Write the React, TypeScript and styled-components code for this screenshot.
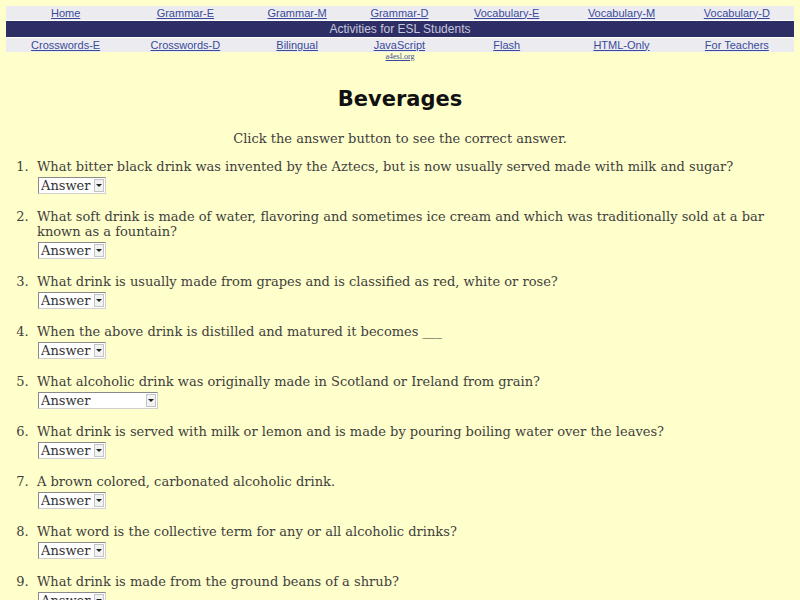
import React from 'react';
import styled, { createGlobalStyle } from 'styled-components';

const GlobalStyle = createGlobalStyle`
  html, body {
    margin: 0;
    background: #ffffcc;
  }
  body {
    padding: 6px 6px 0 6px;
    font-family: "DejaVu Serif", "Liberation Serif", serif;
    color: #3e3e3e;
  }
`;

const NavTable = styled.table`
  width: 100%;
  border-collapse: collapse;
  background: #ececf0;
  font-family: "Liberation Sans", Arial, sans-serif;
  font-size: 11px;
`;

const NavCell = styled.td`
  text-align: center;
  padding: 0 2px;
  height: 14px;
  line-height: 13px;
`;

const NavLink = styled.a`
  color: #3a4a9a;
  text-decoration: underline;
`;

const BandCell = styled.td`
  background: #2e2e66;
  color: #c8c8dc;
  text-align: center;
  font-size: 12px;
  height: 16px;
  line-height: 16px;
  padding: 0;
  border-top: 1px solid #ffffff;
  border-bottom: 1px solid #ffffff;
`;

const SiteLink = styled.a`
  display: block;
  text-align: center;
  font-family: "Liberation Serif", serif;
  font-size: 8px;
  line-height: 10px;
  color: #3a4a9a;
  margin-top: 0;
`;

const Title = styled.h1`
  font-family: "Comic Sans MS", "DejaVu Sans", sans-serif;
  font-weight: bold;
  font-size: 21px;
  color: #111;
  text-align: center;
  margin: 25px 0 20px;
`;

const Intro = styled.p`
  text-align: center;
  font-size: 13px;
  margin: 0 0 13px;
`;

const QuestionList = styled.ol`
  margin: 0;
  padding-left: 31px;
  font-size: 13px;
  line-height: 15px;
  li::marker {
    content: counter(list-item) ".\\00a0\\00a0";
  }
`;

const Question = styled.li`
  margin-bottom: 15px;
`;

const SelectWrap = styled.span<{ $wide?: boolean }>`
  position: relative;
  display: inline-block;
  width: ${(p) => (p.$wide ? '120px' : '68px')};
  height: 17px;
  margin-top: 3px;
  margin-left: 1px;
`;

const AnswerSelect = styled.select`
  appearance: none;
  width: 100%;
  height: 100%;
  box-sizing: border-box;
  border: 1px solid #8a8a8a;
  border-right-color: #d0d0d0;
  border-bottom-color: #d0d0d0;
  background: #ffffff;
  font-family: "DejaVu Serif", serif;
  font-size: 13px;
  color: #333;
  padding: 0 0 0 2px;
  border-radius: 0;
`;

const Arrow = styled.span`
  position: absolute;
  right: 2px;
  top: 2px;
  width: 10px;
  height: 13px;
  background: #f2f2f2;
  border: 1px solid #c4c4c4;
  box-sizing: border-box;
  pointer-events: none;
  &::after {
    content: '';
    position: absolute;
    left: 1px;
    top: 4px;
    border-left: 3px solid transparent;
    border-right: 3px solid transparent;
    border-top: 3px solid #222;
  }
`;

const topLinks = ['Home', 'Grammar-E', 'Grammar-M', 'Grammar-D', 'Vocabulary-E', 'Vocabulary-M', 'Vocabulary-D'];
const bottomLinks = ['Crosswords-E', 'Crosswords-D', 'Bilingual', 'JavaScript', 'Flash', 'HTML-Only', 'For Teachers'];

const questions: { text: string; wide?: boolean }[] = [
  { text: 'What bitter black drink was invented by the Aztecs, but is now usually served made with milk and sugar?' },
  { text: 'What soft drink is made of water, flavoring and sometimes ice cream and which was traditionally sold at a bar known as a fountain?' },
  { text: 'What drink is usually made from grapes and is classified as red, white or rose?' },
  { text: 'When the above drink is distilled and matured it becomes ___' },
  { text: 'What alcoholic drink was originally made in Scotland or Ireland from grain?', wide: true },
  { text: 'What drink is served with milk or lemon and is made by pouring boiling water over the leaves?' },
  { text: 'A brown colored, carbonated alcoholic drink.' },
  { text: 'What word is the collective term for any or all alcoholic drinks?' },
  { text: 'What drink is made from the ground beans of a shrub?' },
];

const App = () => {
  return (
    <>
      <GlobalStyle />
      <NavTable>
        <tbody>
          <tr>
            {topLinks.map((l) => (
              <NavCell key={l}>
                <NavLink href="#">{l}</NavLink>
              </NavCell>
            ))}
          </tr>
          <tr>
            <BandCell colSpan={7}>Activities for ESL Students</BandCell>
          </tr>
          <tr>
            {bottomLinks.map((l) => (
              <NavCell key={l}>
                <NavLink href="#">{l}</NavLink>
              </NavCell>
            ))}
          </tr>
        </tbody>
      </NavTable>
      <SiteLink href="#">a4esl.org</SiteLink>

      <Title>Beverages</Title>
      <Intro>Click the answer button to see the correct answer.</Intro>

      <QuestionList>
        {questions.map((q, i) => (
          <Question key={i}>
            {q.text}
            <br />
            <SelectWrap $wide={q.wide}>
              <AnswerSelect defaultValue="Answer">
                <option>Answer</option>
              </AnswerSelect>
              <Arrow />
            </SelectWrap>
          </Question>
        ))}
      </QuestionList>
    </>
  );
};

export default App;
